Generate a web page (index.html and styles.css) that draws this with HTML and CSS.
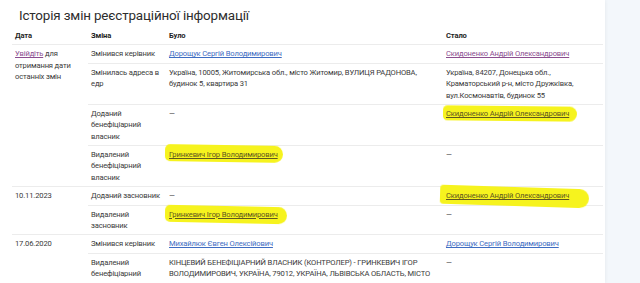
FILE: index.html
```html
<!DOCTYPE html>
<html lang="uk">
<head>
<meta charset="utf-8">
<title>Історія змін</title>
<link rel="stylesheet" href="styles.css">
</head>
<body>
<div class="page">
  <main class="card">
    <h1 class="title">Історія змін реєстраційної інформації</h1>
    <table class="hist">
      <colgroup>
        <col class="c-date"><col class="c-chg"><col class="c-old"><col class="c-new">
      </colgroup>
      <thead>
        <tr><th>Дата</th><th>Зміна</th><th>Було</th><th>Стало</th></tr>
      </thead>
      <tbody>
        <tr class="grp">
          <td rowspan="4" class="date"><a class="visited" href="#">Увійдіть</a> для отримання дати останніх змін</td>
          <td>Змінився керівник</td>
          <td><a class="link" href="#">Дорощук Сергій Володимирович</a></td>
          <td><a class="visited" href="#">Скидоненко Андрій Олександрович</a></td>
        </tr>
        <tr>
          <td>Змінилась адреса в едр</td>
          <td>Україна, 10005, Житомирська обл., місто Житомир, ВУЛИЦЯ РАДОНОВА, будинок 5, квартира 31</td>
          <td>Україна, 84207, Донецька обл., Краматорський р-н, місто Дружківка, вул.Космонавтів, будинок 55</td>
        </tr>
        <tr>
          <td>Доданий бенефіціарний власник</td>
          <td>—</td>
          <td><span class="hl hl-1"><a class="marked" href="#">Скидоненко Андрій Олександрович</a></span></td>
        </tr>
        <tr>
          <td>Видалений бенефіціарний власник</td>
          <td><span class="hl hl-2"><a class="marked" href="#">Гринкевич Ігор Володимирович</a></span></td>
          <td>—</td>
        </tr>
        <tr class="grp">
          <td rowspan="2" class="date">10.11.2023</td>
          <td>Доданий засновник</td>
          <td>—</td>
          <td><span class="hl hl-3"><a class="marked" href="#">Скидоненко Андрій Олександрович</a></span></td>
        </tr>
        <tr>
          <td>Видалений засновник</td>
          <td><span class="hl hl-4"><a class="marked" href="#">Гринкевич Ігор Володимирович</a></span></td>
          <td>—</td>
        </tr>
        <tr class="grp">
          <td rowspan="2" class="date">17.06.2020</td>
          <td>Змінився керівник</td>
          <td><a class="link" href="#">Михайлюк Євген Олексійович</a></td>
          <td><a class="link" href="#">Дорощук Сергій Володимирович</a></td>
        </tr>
        <tr>
          <td>Видалений бенефіціарний власник</td>
          <td>КІНЦЕВИЙ БЕНЕФІЦІАРНИЙ ВЛАСНИК (КОНТРОЛЕР) - ГРИНКЕВИЧ ІГОР ВОЛОДИМИРОВИЧ, УКРАЇНА, 79012, УКРАЇНА, ЛЬВІВСЬКА ОБЛАСТЬ, МІСТО ЛЬВІВ, ВУЛИЦЯ ОСТРОГЛЯДСЬКИХ, БУДИНОК 5, КВАРТИРА 45</td>
          <td>—</td>
        </tr>
      </tbody>
    </table>
  </main>
</div>
</body>
</html>
```
FILE: styles.css
```css
html, body {
  margin: 0;
  padding: 0;
  height: 100%;
  overflow: hidden;
}
body {
  background: #f3f7fb;
  font-family: Roboto, "Noto Sans", "DejaVu Sans", sans-serif;
  color: #3a3a3a;
}
.page {
  display: flex;
  height: 100%;
}
.card {
  width: 605px;
  background: #ffffff;
  box-shadow: 0 0 4px rgba(0, 0, 0, 0.07);
  padding: 0 0 0 12px;
  box-sizing: border-box;
}
.title {
  margin: 5px 0 0 7px;
  font-size: 13.4px;
  line-height: 21px;
  font-weight: 400;
  letter-spacing: -0.15px;
  color: #2d2d2d;
}
.hist {
  width: 591px;
  border-collapse: collapse;
  table-layout: fixed;
  font-size: 7.6px;
  line-height: 11.3px;
  letter-spacing: -0.15px;
}
.c-date { width: 76px; }
.c-chg { width: 78px; }
.c-old { width: 277px; }
.c-new { width: 160px; }
.hist th, .hist td {
  padding: 3.1px 4px 3.1px 3px;
  text-align: left;
  vertical-align: top;
  border-top: 1px solid #ececec;
}
.hist th {
  font-weight: 700;
  color: #1f1f1f;
  border-top: none;
  padding-top: 3.5px;
  padding-bottom: 3.6px;
}
.hist thead tr {
  border-bottom: 1px solid #e8e8e8;
}
.hist td:last-child { padding-right: 14px; }
a.link { color: #3e6cc2; text-decoration: underline; }
a.visited { color: #8b4d8f; text-decoration: underline; }
a.marked { color: #5e5620; text-decoration: underline; position: relative; }
.hl {
  position: relative;
  display: inline-block;
  isolation: isolate;
}
.hl::before {
  content: "";
  position: absolute;
  z-index: -1;
  background: #f6f31e;
  border-radius: 6px 10px 10px 6px;
  filter: blur(0.6px);
}
.hl-1::before { left: -3px; right: -8px; top: -2px; bottom: -2px; transform: rotate(0.6deg); }
.hl-2::before { left: -4px; right: -5px; top: -4px; bottom: -2px; transform: rotate(0.9deg); }
.hl-3::before { left: -6px; right: -20px; top: -3px; bottom: -5px; transform: rotate(1.8deg); border-radius: 5px 14px 14px 5px; }
.hl-4::before { left: -4px; right: -9px; top: -3px; bottom: -3px; transform: rotate(1.2deg); }
```
